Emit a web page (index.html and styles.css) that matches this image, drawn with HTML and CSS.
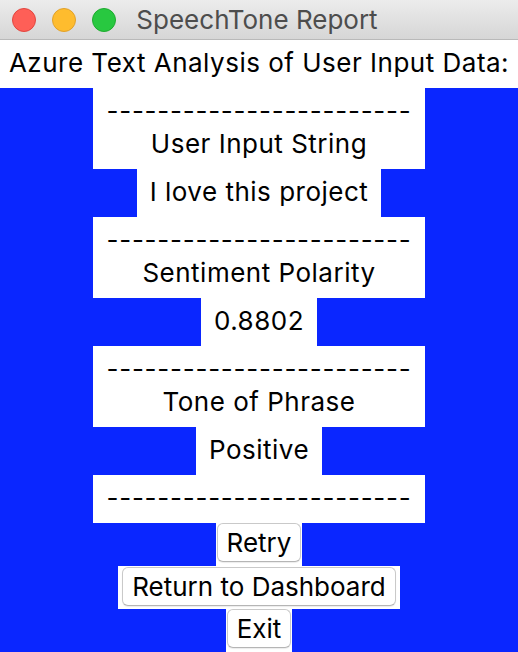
FILE: index.html
```html
<!DOCTYPE html>
<html>
<head>
<meta charset="utf-8">
<link rel="stylesheet" href="styles.css">
</head>
<body>
<div class="window">
  <div class="titlebar">
    <div class="lights">
      <span class="light red"></span>
      <span class="light yellow"></span>
      <span class="light green"></span>
    </div>
    <div class="title">SpeechTone Report</div>
    <div></div>
  </div>
  <div class="heading">Azure Text Analysis of User Input Data:</div>
  <div class="panel">
    <div class="label wide"><span class="dashes">------------------------</span><br>User Input String</div>
    <div class="label">I love this project</div>
    <div class="label wide"><span class="dashes">------------------------</span><br>Sentiment Polarity</div>
    <div class="label">0.8802</div>
    <div class="label wide"><span class="dashes">------------------------</span><br>Tone of Phrase</div>
    <div class="label">Positive</div>
    <div class="label wide"><span class="dashes">------------------------</span></div>
    <div class="btn-wrap"><button class="btn">Retry</button></div>
    <div class="btn-wrap roomy"><button class="btn">Return to Dashboard</button></div>
    <div class="btn-wrap"><button class="btn">Exit</button></div>
  </div>
</div>
</body>
</html>
```

FILE: styles.css
```css
html, body {
  margin: 0;
  padding: 0;
}
body {
  width: 518px;
  height: 652px;
  overflow: hidden;
  font-family: Inter, "Liberation Sans", sans-serif;
  font-size: 26px;
  letter-spacing: 0.5px;
  color: #000;
}
.window {
  display: flex;
  flex-direction: column;
  height: 652px;
}
.titlebar {
  height: 39px;
  border-bottom: 1px solid #b9b9b9;
  background: linear-gradient(#ececec, #d6d6d6);
  display: grid;
  grid-template-columns: 1fr auto 1fr;
  align-items: center;
}
.lights {
  display: flex;
  gap: 16px;
  padding-left: 12px;
}
.light {
  width: 22px;
  height: 22px;
  border-radius: 50%;
  border: 1px solid transparent;
}
.red { background: #fe5f57; border-color: #e2463f; }
.yellow { background: #febc2e; border-color: #e1a12a; }
.green { background: #28c840; border-color: #1eab2f; }
.title {
  color: #4d4d4d;
  font-size: 26px;
  letter-spacing: 0;
  margin-left: -4px;
}
.heading {
  background: #fff;
  height: 48px;
  line-height: 46px;
  text-align: center;
}
.panel {
  flex: 1;
  background: #0a26ff;
  display: flex;
  flex-direction: column;
  align-items: center;
}
.label {
  background: #fff;
  padding: 6px 13px 9px;
  line-height: 33px;
  text-align: center;
  white-space: nowrap;
}
.dashes {
  letter-spacing: 0.75px;
}
.btn-wrap {
  background: #fff;
  padding: 0 1px 4px;
}
.btn-wrap.roomy {
  padding: 1px 4px 3px;
}
.btn {
  font: inherit;
  color: #000;
  background: #fff;
  border: 1px solid #c9c9c9;
  border-bottom-color: #b5b5b5;
  border-radius: 6px;
  padding: 0 9px;
  height: 39px;
  line-height: 36px;
  box-shadow: 0 1px 1px rgba(0,0,0,0.08);
}
```
